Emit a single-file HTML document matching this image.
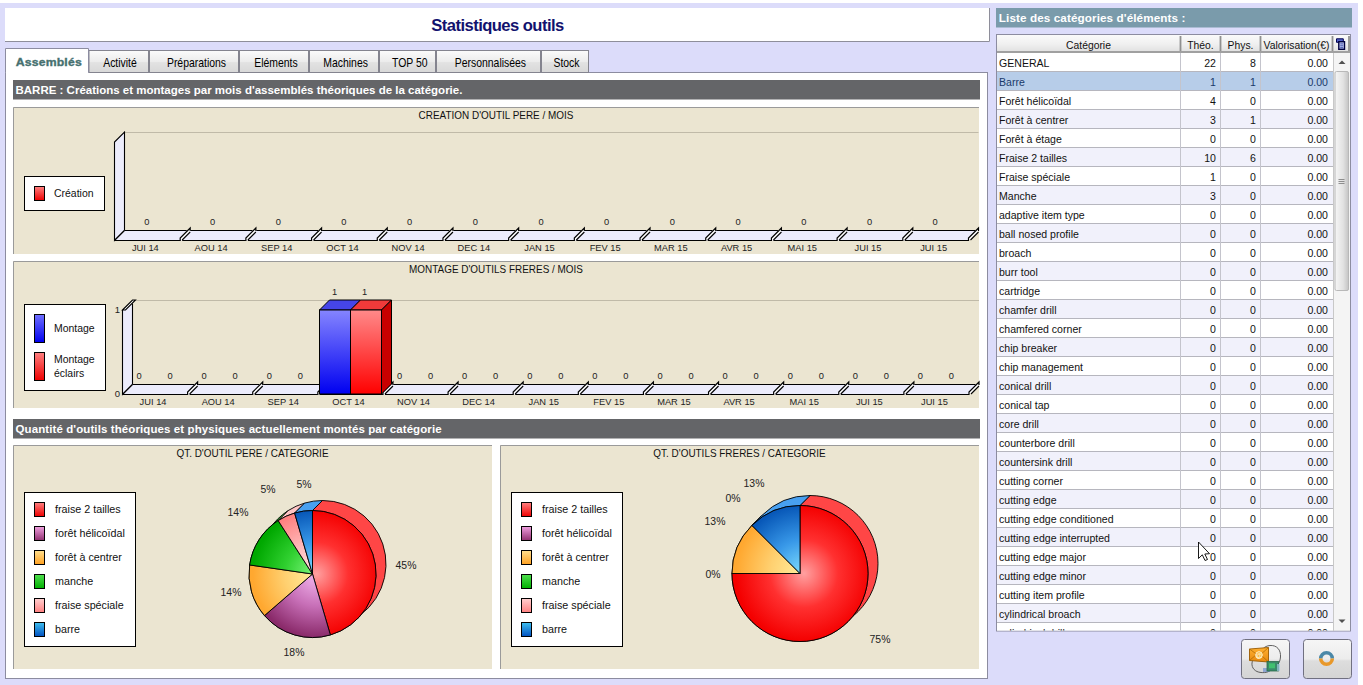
<!DOCTYPE html>
<html><head><meta charset="utf-8"><title>Statistiques outils</title>
<style>html,body{margin:0;padding:0;width:1363px;height:685px;overflow:hidden;background:#dcdcfa;} svg{display:block;font-family:"Liberation Sans", sans-serif;}</style>
</head><body><svg width="1363" height="685" viewBox="0 0 1363 685" font-family='"Liberation Sans", sans-serif'>
<defs>
<linearGradient id="tabg" x1="0" y1="0" x2="0" y2="1">
 <stop offset="0" stop-color="#fbfbfb"/><stop offset="0.5" stop-color="#ececec"/><stop offset="0.55" stop-color="#e2e2e2"/><stop offset="1" stop-color="#d8d8d8"/>
</linearGradient>
<linearGradient id="hdrg" x1="0" y1="0" x2="0" y2="1">
 <stop offset="0" stop-color="#fafafa"/><stop offset="0.5" stop-color="#f0f0f0"/><stop offset="1" stop-color="#dedede"/>
</linearGradient>
<linearGradient id="btng" x1="0" y1="0" x2="0" y2="1">
 <stop offset="0" stop-color="#f6f6f6"/><stop offset="0.5" stop-color="#ececec"/><stop offset="0.55" stop-color="#dddddd"/><stop offset="1" stop-color="#d4d4d4"/>
</linearGradient>
<linearGradient id="blueBar" x1="0" y1="0" x2="0" y2="1">
 <stop offset="0" stop-color="#8585ff"/><stop offset="1" stop-color="#0000f0"/>
</linearGradient>
<linearGradient id="redBar" x1="0" y1="0" x2="0" y2="1">
 <stop offset="0" stop-color="#ff8a8a"/><stop offset="1" stop-color="#ff0000"/>
</linearGradient>
<linearGradient id="lgRed" x1="0" y1="0" x2="0" y2="1"><stop offset="0" stop-color="#ff8080"/><stop offset="1" stop-color="#ee0000"/></linearGradient>
<linearGradient id="lgBlue" x1="0" y1="0" x2="0" y2="1"><stop offset="0" stop-color="#7070ff"/><stop offset="1" stop-color="#0000ee"/></linearGradient>
<linearGradient id="lgPurple" x1="0" y1="0" x2="0" y2="1"><stop offset="0" stop-color="#f0a0e0"/><stop offset="1" stop-color="#903070"/></linearGradient>
<linearGradient id="lgOrange" x1="0" y1="0" x2="0" y2="1"><stop offset="0" stop-color="#ffe090"/><stop offset="1" stop-color="#ffa020"/></linearGradient>
<linearGradient id="lgGreen" x1="0" y1="0" x2="0" y2="1"><stop offset="0" stop-color="#50e050"/><stop offset="1" stop-color="#00b000"/></linearGradient>
<linearGradient id="lgPink" x1="0" y1="0" x2="0" y2="1"><stop offset="0" stop-color="#ffd0d0"/><stop offset="1" stop-color="#ff8080"/></linearGradient>
<linearGradient id="lgBarre" x1="0" y1="0" x2="0" y2="1"><stop offset="0" stop-color="#40c0f0"/><stop offset="1" stop-color="#0050c0"/></linearGradient>
<radialGradient id="pRed" cx="0.6" cy="0.45" r="0.6"><stop offset="0" stop-color="#ff9a9a"/><stop offset="1" stop-color="#ff0000"/></radialGradient>
<linearGradient id="pPurple" x1="0" y1="1" x2="1" y2="0"><stop offset="0" stop-color="#902c70"/><stop offset="1" stop-color="#f0a0e8"/></linearGradient>
<linearGradient id="pOrange" x1="0" y1="0" x2="1" y2="0.3"><stop offset="0" stop-color="#ffb040"/><stop offset="1" stop-color="#ffe890"/></linearGradient>
<linearGradient id="pGreen" x1="0" y1="0.3" x2="1" y2="0.7"><stop offset="0" stop-color="#00b800"/><stop offset="1" stop-color="#60f060"/></linearGradient>
<linearGradient id="pPink" x1="0" y1="0" x2="1" y2="1"><stop offset="0" stop-color="#ff8888"/><stop offset="1" stop-color="#ffd0d0"/></linearGradient>
<linearGradient id="pBlue" x1="0" y1="0" x2="1" y2="1"><stop offset="0" stop-color="#0048b8"/><stop offset="1" stop-color="#50c0ff"/></linearGradient>
</defs>
<rect x="0" y="0" width="1363" height="685" fill="#dcdcfa"/>
<rect x="0" y="0" width="1363" height="3" fill="#ffffff"/>
<rect x="1358" y="0" width="5" height="685" fill="#ffffff"/>
<rect x="5" y="8" width="985" height="34" fill="#ffffff"/>
<path d="M989.5 8 V41.5 H5" fill="none" stroke="#8e8e9a" stroke-width="1"/>
<text x="497.5" y="31" font-size="16.6" font-weight="700" fill="#12126e" text-anchor="middle" letter-spacing="-0.55" >Statistiques outils</text>
<rect x="5.5" y="72.5" width="982" height="606" fill="#ffffff" stroke="#8c8ca0" stroke-width="1"/>
<rect x="89" y="50.5" width="59.5" height="22" fill="url(#tabg)" stroke="#84848f" stroke-width="1"/>
<text transform="translate(120 67) scale(0.87 1)" x="0" y="0" font-size="12" font-weight="400" fill="#000" text-anchor="middle" >Activité</text>
<rect x="149.5" y="50.5" width="89.0" height="22" fill="url(#tabg)" stroke="#84848f" stroke-width="1"/>
<text transform="translate(196.5 67) scale(0.87 1)" x="0" y="0" font-size="12" font-weight="400" fill="#000" text-anchor="middle" >Préparations</text>
<rect x="239.5" y="50.5" width="69.0" height="22" fill="url(#tabg)" stroke="#84848f" stroke-width="1"/>
<text transform="translate(276 67) scale(0.87 1)" x="0" y="0" font-size="12" font-weight="400" fill="#000" text-anchor="middle" >Eléments</text>
<rect x="309.5" y="50.5" width="69.0" height="22" fill="url(#tabg)" stroke="#84848f" stroke-width="1"/>
<text transform="translate(345.6 67) scale(0.87 1)" x="0" y="0" font-size="12" font-weight="400" fill="#000" text-anchor="middle" >Machines</text>
<rect x="379.5" y="50.5" width="56.0" height="22" fill="url(#tabg)" stroke="#84848f" stroke-width="1"/>
<text transform="translate(409.8 67) scale(0.87 1)" x="0" y="0" font-size="12" font-weight="400" fill="#000" text-anchor="middle" >TOP 50</text>
<rect x="436.5" y="50.5" width="104.0" height="22" fill="url(#tabg)" stroke="#84848f" stroke-width="1"/>
<text transform="translate(490.4 67) scale(0.87 1)" x="0" y="0" font-size="12" font-weight="400" fill="#000" text-anchor="middle" >Personnalisées</text>
<rect x="541.5" y="50.5" width="47.0" height="22" fill="url(#tabg)" stroke="#84848f" stroke-width="1"/>
<text transform="translate(566.5 67) scale(0.87 1)" x="0" y="0" font-size="12" font-weight="400" fill="#000" text-anchor="middle" >Stock</text>
<path d="M5.5 72.5 V48.5 H88.5 V72.5" fill="#ffffff" stroke="#8c8ca0" stroke-width="1"/>
<rect x="6" y="70" width="82" height="4" fill="#ffffff"/>
<g transform="translate(48.8 65.9) scale(1.115 1)"><text x="0" y="0" font-size="11" font-weight="700" fill="#46706f" text-anchor="middle" letter-spacing="0.15" stroke="#46706f" stroke-width="0.35">Assemblés</text></g>
<rect x="13" y="80" width="967" height="19.5" fill="#646568"/>
<text x="15.5" y="94.3" font-size="11.5" font-weight="700" fill="#ffffff" text-anchor="start" >BARRE : Créations et montages par mois d'assemblés théoriques de la catégorie.</text>
<rect x="13" y="107" width="966" height="147" fill="#ebe5d1"/>
<path d="M13.5 254 V107.5 H979" fill="none" stroke="#9a9a9a" stroke-width="1"/>
<text transform="translate(496 118.6) scale(0.925 1)" x="0" y="0" font-size="10.75" font-weight="400" fill="#111" text-anchor="middle" >CREATION D'OUTIL PERE / MOIS</text>
<line x1="124.5" y1="132.5" x2="978.5" y2="132.5" stroke="#c0baa8" stroke-width="1"/>
<path d="M114.5 240.5 V142 L124.5 132 V230.5 Z" fill="#ececfc" stroke="#000" stroke-width="1.1"/>
<path d="M114.5 240.5 L124.5 230.5 H978.5 L968.5 240.5 Z" fill="#ececfc"/>
<path d="M114.5 240.5 L124.5 230.5" stroke="#000" stroke-width="1.1"/>
<path d="M114.5 240.5 H180.19230769230768" stroke="#000" stroke-width="1.1"/>
<path d="M124.5 230.5 H186.69230769230768" stroke="#000" stroke-width="1.1"/>
<path d="M182.19230769230768 240.5 H245.8846153846154" stroke="#000" stroke-width="1.1"/>
<path d="M190.69230769230768 230.5 H252.3846153846154" stroke="#000" stroke-width="1.1"/>
<path d="M247.8846153846154 240.5 H311.5769230769231" stroke="#000" stroke-width="1.1"/>
<path d="M256.38461538461536 230.5 H318.0769230769231" stroke="#000" stroke-width="1.1"/>
<path d="M313.5769230769231 240.5 H377.2692307692308" stroke="#000" stroke-width="1.1"/>
<path d="M322.0769230769231 230.5 H383.7692307692308" stroke="#000" stroke-width="1.1"/>
<path d="M379.2692307692308 240.5 H442.96153846153845" stroke="#000" stroke-width="1.1"/>
<path d="M387.7692307692308 230.5 H449.46153846153845" stroke="#000" stroke-width="1.1"/>
<path d="M444.96153846153845 240.5 H508.6538461538462" stroke="#000" stroke-width="1.1"/>
<path d="M453.46153846153845 230.5 H515.1538461538462" stroke="#000" stroke-width="1.1"/>
<path d="M510.6538461538462 240.5 H574.3461538461538" stroke="#000" stroke-width="1.1"/>
<path d="M519.1538461538462 230.5 H580.8461538461538" stroke="#000" stroke-width="1.1"/>
<path d="M576.3461538461538 240.5 H640.0384615384615" stroke="#000" stroke-width="1.1"/>
<path d="M584.8461538461538 230.5 H646.5384615384615" stroke="#000" stroke-width="1.1"/>
<path d="M642.0384615384615 240.5 H705.7307692307693" stroke="#000" stroke-width="1.1"/>
<path d="M650.5384615384615 230.5 H712.2307692307693" stroke="#000" stroke-width="1.1"/>
<path d="M707.7307692307693 240.5 H771.4230769230769" stroke="#000" stroke-width="1.1"/>
<path d="M716.2307692307693 230.5 H777.9230769230769" stroke="#000" stroke-width="1.1"/>
<path d="M773.4230769230769 240.5 H837.1153846153846" stroke="#000" stroke-width="1.1"/>
<path d="M781.9230769230769 230.5 H843.6153846153846" stroke="#000" stroke-width="1.1"/>
<path d="M839.1153846153846 240.5 H902.8076923076924" stroke="#000" stroke-width="1.1"/>
<path d="M847.6153846153846 230.5 H909.3076923076924" stroke="#000" stroke-width="1.1"/>
<path d="M904.8076923076924 240.5 H968.5" stroke="#000" stroke-width="1.1"/>
<path d="M913.3076923076924 230.5 H975.0" stroke="#000" stroke-width="1.1"/>
<path d="M180.19230769230768 240.5 V238.0 L190.19230769230768 228.0 V231.0 L182.19230769230768 239.0 Z" fill="#ffffff" stroke="none"/>
<path d="M180.19230769230768 241.0 V238.0 L190.19230769230768 228.0 V231.0" stroke="#000" stroke-width="1.2" fill="none"/>
<path d="M182.19230769230768 240.0 L190.19230769230768 232.0" stroke="#000" stroke-width="1.1" fill="none"/>
<path d="M245.8846153846154 240.5 V238.0 L255.8846153846154 228.0 V231.0 L247.8846153846154 239.0 Z" fill="#ffffff" stroke="none"/>
<path d="M245.8846153846154 241.0 V238.0 L255.8846153846154 228.0 V231.0" stroke="#000" stroke-width="1.2" fill="none"/>
<path d="M247.8846153846154 240.0 L255.8846153846154 232.0" stroke="#000" stroke-width="1.1" fill="none"/>
<path d="M311.5769230769231 240.5 V238.0 L321.5769230769231 228.0 V231.0 L313.5769230769231 239.0 Z" fill="#ffffff" stroke="none"/>
<path d="M311.5769230769231 241.0 V238.0 L321.5769230769231 228.0 V231.0" stroke="#000" stroke-width="1.2" fill="none"/>
<path d="M313.5769230769231 240.0 L321.5769230769231 232.0" stroke="#000" stroke-width="1.1" fill="none"/>
<path d="M377.2692307692308 240.5 V238.0 L387.2692307692308 228.0 V231.0 L379.2692307692308 239.0 Z" fill="#ffffff" stroke="none"/>
<path d="M377.2692307692308 241.0 V238.0 L387.2692307692308 228.0 V231.0" stroke="#000" stroke-width="1.2" fill="none"/>
<path d="M379.2692307692308 240.0 L387.2692307692308 232.0" stroke="#000" stroke-width="1.1" fill="none"/>
<path d="M442.96153846153845 240.5 V238.0 L452.96153846153845 228.0 V231.0 L444.96153846153845 239.0 Z" fill="#ffffff" stroke="none"/>
<path d="M442.96153846153845 241.0 V238.0 L452.96153846153845 228.0 V231.0" stroke="#000" stroke-width="1.2" fill="none"/>
<path d="M444.96153846153845 240.0 L452.96153846153845 232.0" stroke="#000" stroke-width="1.1" fill="none"/>
<path d="M508.6538461538462 240.5 V238.0 L518.6538461538462 228.0 V231.0 L510.6538461538462 239.0 Z" fill="#ffffff" stroke="none"/>
<path d="M508.6538461538462 241.0 V238.0 L518.6538461538462 228.0 V231.0" stroke="#000" stroke-width="1.2" fill="none"/>
<path d="M510.6538461538462 240.0 L518.6538461538462 232.0" stroke="#000" stroke-width="1.1" fill="none"/>
<path d="M574.3461538461538 240.5 V238.0 L584.3461538461538 228.0 V231.0 L576.3461538461538 239.0 Z" fill="#ffffff" stroke="none"/>
<path d="M574.3461538461538 241.0 V238.0 L584.3461538461538 228.0 V231.0" stroke="#000" stroke-width="1.2" fill="none"/>
<path d="M576.3461538461538 240.0 L584.3461538461538 232.0" stroke="#000" stroke-width="1.1" fill="none"/>
<path d="M640.0384615384615 240.5 V238.0 L650.0384615384615 228.0 V231.0 L642.0384615384615 239.0 Z" fill="#ffffff" stroke="none"/>
<path d="M640.0384615384615 241.0 V238.0 L650.0384615384615 228.0 V231.0" stroke="#000" stroke-width="1.2" fill="none"/>
<path d="M642.0384615384615 240.0 L650.0384615384615 232.0" stroke="#000" stroke-width="1.1" fill="none"/>
<path d="M705.7307692307693 240.5 V238.0 L715.7307692307693 228.0 V231.0 L707.7307692307693 239.0 Z" fill="#ffffff" stroke="none"/>
<path d="M705.7307692307693 241.0 V238.0 L715.7307692307693 228.0 V231.0" stroke="#000" stroke-width="1.2" fill="none"/>
<path d="M707.7307692307693 240.0 L715.7307692307693 232.0" stroke="#000" stroke-width="1.1" fill="none"/>
<path d="M771.4230769230769 240.5 V238.0 L781.4230769230769 228.0 V231.0 L773.4230769230769 239.0 Z" fill="#ffffff" stroke="none"/>
<path d="M771.4230769230769 241.0 V238.0 L781.4230769230769 228.0 V231.0" stroke="#000" stroke-width="1.2" fill="none"/>
<path d="M773.4230769230769 240.0 L781.4230769230769 232.0" stroke="#000" stroke-width="1.1" fill="none"/>
<path d="M837.1153846153846 240.5 V238.0 L847.1153846153846 228.0 V231.0 L839.1153846153846 239.0 Z" fill="#ffffff" stroke="none"/>
<path d="M837.1153846153846 241.0 V238.0 L847.1153846153846 228.0 V231.0" stroke="#000" stroke-width="1.2" fill="none"/>
<path d="M839.1153846153846 240.0 L847.1153846153846 232.0" stroke="#000" stroke-width="1.1" fill="none"/>
<path d="M902.8076923076924 240.5 V238.0 L912.8076923076924 228.0 V231.0 L904.8076923076924 239.0 Z" fill="#ffffff" stroke="none"/>
<path d="M902.8076923076924 241.0 V238.0 L912.8076923076924 228.0 V231.0" stroke="#000" stroke-width="1.2" fill="none"/>
<path d="M904.8076923076924 240.0 L912.8076923076924 232.0" stroke="#000" stroke-width="1.1" fill="none"/>
<path d="M968.5 240.5 V238.0 L978.5 228.0 V231.0 L970.5 239.0 Z" fill="#ffffff" stroke="none"/>
<path d="M968.5 241.0 V238.0 L978.5 228.0 V231.0" stroke="#000" stroke-width="1.2" fill="none"/>
<path d="M970.5 240.0 L978.5 232.0" stroke="#000" stroke-width="1.1" fill="none"/>
<text x="145.34615384615384" y="250.7" font-size="9.3" font-weight="400" fill="#222" text-anchor="middle" >JUI 14</text>
<text x="211.03846153846155" y="250.7" font-size="9.3" font-weight="400" fill="#222" text-anchor="middle" >AOU 14</text>
<text x="276.7307692307692" y="250.7" font-size="9.3" font-weight="400" fill="#222" text-anchor="middle" >SEP 14</text>
<text x="342.4230769230769" y="250.7" font-size="9.3" font-weight="400" fill="#222" text-anchor="middle" >OCT 14</text>
<text x="408.11538461538464" y="250.7" font-size="9.3" font-weight="400" fill="#222" text-anchor="middle" >NOV 14</text>
<text x="473.8076923076923" y="250.7" font-size="9.3" font-weight="400" fill="#222" text-anchor="middle" >DEC 14</text>
<text x="539.5" y="250.7" font-size="9.3" font-weight="400" fill="#222" text-anchor="middle" >JAN 15</text>
<text x="605.1923076923076" y="250.7" font-size="9.3" font-weight="400" fill="#222" text-anchor="middle" >FEV 15</text>
<text x="670.8846153846154" y="250.7" font-size="9.3" font-weight="400" fill="#222" text-anchor="middle" >MAR 15</text>
<text x="736.5769230769231" y="250.7" font-size="9.3" font-weight="400" fill="#222" text-anchor="middle" >AVR 15</text>
<text x="802.2692307692308" y="250.7" font-size="9.3" font-weight="400" fill="#222" text-anchor="middle" >MAI 15</text>
<text x="867.9615384615385" y="250.7" font-size="9.3" font-weight="400" fill="#222" text-anchor="middle" >JUI 15</text>
<text x="933.6538461538462" y="250.7" font-size="9.3" font-weight="400" fill="#222" text-anchor="middle" >JUI 15</text>
<text x="146.84615384615384" y="224.9" font-size="9.3" font-weight="400" fill="#222" text-anchor="middle" >0</text>
<text x="212.53846153846155" y="224.9" font-size="9.3" font-weight="400" fill="#222" text-anchor="middle" >0</text>
<text x="278.2307692307692" y="224.9" font-size="9.3" font-weight="400" fill="#222" text-anchor="middle" >0</text>
<text x="343.9230769230769" y="224.9" font-size="9.3" font-weight="400" fill="#222" text-anchor="middle" >0</text>
<text x="409.61538461538464" y="224.9" font-size="9.3" font-weight="400" fill="#222" text-anchor="middle" >0</text>
<text x="475.3076923076923" y="224.9" font-size="9.3" font-weight="400" fill="#222" text-anchor="middle" >0</text>
<text x="541.0" y="224.9" font-size="9.3" font-weight="400" fill="#222" text-anchor="middle" >0</text>
<text x="606.6923076923076" y="224.9" font-size="9.3" font-weight="400" fill="#222" text-anchor="middle" >0</text>
<text x="672.3846153846154" y="224.9" font-size="9.3" font-weight="400" fill="#222" text-anchor="middle" >0</text>
<text x="738.0769230769231" y="224.9" font-size="9.3" font-weight="400" fill="#222" text-anchor="middle" >0</text>
<text x="803.7692307692308" y="224.9" font-size="9.3" font-weight="400" fill="#222" text-anchor="middle" >0</text>
<text x="869.4615384615385" y="224.9" font-size="9.3" font-weight="400" fill="#222" text-anchor="middle" >0</text>
<text x="935.1538461538462" y="224.9" font-size="9.3" font-weight="400" fill="#222" text-anchor="middle" >0</text>
<rect x="24.5" y="176.5" width="80" height="34" fill="#fff" stroke="#000" stroke-width="1"/>
<rect x="34.5" y="186.5" width="10" height="14" fill="url(#lgRed)" stroke="#000" stroke-width="1"/>
<text transform="translate(54 197) scale(0.91 1)" x="0" y="0" font-size="11.5" font-weight="400" fill="#111" text-anchor="start" >Création</text>
<rect x="13" y="261" width="966" height="147" fill="#ebe5d1"/>
<path d="M13.5 408 V261.5 H979" fill="none" stroke="#9a9a9a" stroke-width="1"/>
<text transform="translate(496 272.6) scale(0.925 1)" x="0" y="0" font-size="10.75" font-weight="400" fill="#111" text-anchor="middle" >MONTAGE D'OUTILS FRERES / MOIS</text>
<line x1="132.5" y1="300.5" x2="979" y2="300.5" stroke="#c0baa8" stroke-width="1"/>
<path d="M122.5 310 V394.5 L132.5 384.5 V303.5" fill="#ececfc" stroke="#000" stroke-width="1.1"/>
<path d="M122.5 310 L132.5 300 H135.5 L125.5 310 Z" fill="#ffffff" stroke="#000" stroke-width="1.1" stroke-linejoin="miter"/>
<path d="M122.5 394.5 L132.5 384.5 H979 L969 394.5 Z" fill="#ececfc"/>
<path d="M122.5 394.5 L132.5 384.5" stroke="#000" stroke-width="1.1"/>
<path d="M122.5 394.5 H187.6153846153846" stroke="#000" stroke-width="1.1"/>
<path d="M132.5 384.5 H194.1153846153846" stroke="#000" stroke-width="1.1"/>
<path d="M189.6153846153846 394.5 H252.73076923076923" stroke="#000" stroke-width="1.1"/>
<path d="M198.1153846153846 384.5 H259.2307692307692" stroke="#000" stroke-width="1.1"/>
<path d="M254.73076923076923 394.5 H317.8461538461538" stroke="#000" stroke-width="1.1"/>
<path d="M263.2307692307692 384.5 H324.3461538461538" stroke="#000" stroke-width="1.1"/>
<path d="M319.8461538461538 394.5 H382.96153846153845" stroke="#000" stroke-width="1.1"/>
<path d="M328.3461538461538 384.5 H389.46153846153845" stroke="#000" stroke-width="1.1"/>
<path d="M384.96153846153845 394.5 H448.0769230769231" stroke="#000" stroke-width="1.1"/>
<path d="M393.46153846153845 384.5 H454.5769230769231" stroke="#000" stroke-width="1.1"/>
<path d="M450.0769230769231 394.5 H513.1923076923076" stroke="#000" stroke-width="1.1"/>
<path d="M458.5769230769231 384.5 H519.6923076923076" stroke="#000" stroke-width="1.1"/>
<path d="M515.1923076923076 394.5 H578.3076923076923" stroke="#000" stroke-width="1.1"/>
<path d="M523.6923076923076 384.5 H584.8076923076923" stroke="#000" stroke-width="1.1"/>
<path d="M580.3076923076923 394.5 H643.4230769230769" stroke="#000" stroke-width="1.1"/>
<path d="M588.8076923076923 384.5 H649.9230769230769" stroke="#000" stroke-width="1.1"/>
<path d="M645.4230769230769 394.5 H708.5384615384615" stroke="#000" stroke-width="1.1"/>
<path d="M653.9230769230769 384.5 H715.0384615384615" stroke="#000" stroke-width="1.1"/>
<path d="M710.5384615384615 394.5 H773.6538461538462" stroke="#000" stroke-width="1.1"/>
<path d="M719.0384615384615 384.5 H780.1538461538462" stroke="#000" stroke-width="1.1"/>
<path d="M775.6538461538462 394.5 H838.7692307692307" stroke="#000" stroke-width="1.1"/>
<path d="M784.1538461538462 384.5 H845.2692307692307" stroke="#000" stroke-width="1.1"/>
<path d="M840.7692307692307 394.5 H903.8846153846154" stroke="#000" stroke-width="1.1"/>
<path d="M849.2692307692307 384.5 H910.3846153846154" stroke="#000" stroke-width="1.1"/>
<path d="M905.8846153846154 394.5 H969.0" stroke="#000" stroke-width="1.1"/>
<path d="M914.3846153846154 384.5 H975.5" stroke="#000" stroke-width="1.1"/>
<path d="M187.6153846153846 394.5 V392.0 L197.6153846153846 382.0 V385.0 L189.6153846153846 393.0 Z" fill="#ffffff" stroke="none"/>
<path d="M187.6153846153846 395.0 V392.0 L197.6153846153846 382.0 V385.0" stroke="#000" stroke-width="1.2" fill="none"/>
<path d="M189.6153846153846 394.0 L197.6153846153846 386.0" stroke="#000" stroke-width="1.1" fill="none"/>
<path d="M252.73076923076923 394.5 V392.0 L262.7307692307692 382.0 V385.0 L254.73076923076923 393.0 Z" fill="#ffffff" stroke="none"/>
<path d="M252.73076923076923 395.0 V392.0 L262.7307692307692 382.0 V385.0" stroke="#000" stroke-width="1.2" fill="none"/>
<path d="M254.73076923076923 394.0 L262.7307692307692 386.0" stroke="#000" stroke-width="1.1" fill="none"/>
<path d="M317.8461538461538 394.5 V392.0 L327.8461538461538 382.0 V385.0 L319.8461538461538 393.0 Z" fill="#ffffff" stroke="none"/>
<path d="M317.8461538461538 395.0 V392.0 L327.8461538461538 382.0 V385.0" stroke="#000" stroke-width="1.2" fill="none"/>
<path d="M319.8461538461538 394.0 L327.8461538461538 386.0" stroke="#000" stroke-width="1.1" fill="none"/>
<path d="M382.96153846153845 394.5 V392.0 L392.96153846153845 382.0 V385.0 L384.96153846153845 393.0 Z" fill="#ffffff" stroke="none"/>
<path d="M382.96153846153845 395.0 V392.0 L392.96153846153845 382.0 V385.0" stroke="#000" stroke-width="1.2" fill="none"/>
<path d="M384.96153846153845 394.0 L392.96153846153845 386.0" stroke="#000" stroke-width="1.1" fill="none"/>
<path d="M448.0769230769231 394.5 V392.0 L458.0769230769231 382.0 V385.0 L450.0769230769231 393.0 Z" fill="#ffffff" stroke="none"/>
<path d="M448.0769230769231 395.0 V392.0 L458.0769230769231 382.0 V385.0" stroke="#000" stroke-width="1.2" fill="none"/>
<path d="M450.0769230769231 394.0 L458.0769230769231 386.0" stroke="#000" stroke-width="1.1" fill="none"/>
<path d="M513.1923076923076 394.5 V392.0 L523.1923076923076 382.0 V385.0 L515.1923076923076 393.0 Z" fill="#ffffff" stroke="none"/>
<path d="M513.1923076923076 395.0 V392.0 L523.1923076923076 382.0 V385.0" stroke="#000" stroke-width="1.2" fill="none"/>
<path d="M515.1923076923076 394.0 L523.1923076923076 386.0" stroke="#000" stroke-width="1.1" fill="none"/>
<path d="M578.3076923076923 394.5 V392.0 L588.3076923076923 382.0 V385.0 L580.3076923076923 393.0 Z" fill="#ffffff" stroke="none"/>
<path d="M578.3076923076923 395.0 V392.0 L588.3076923076923 382.0 V385.0" stroke="#000" stroke-width="1.2" fill="none"/>
<path d="M580.3076923076923 394.0 L588.3076923076923 386.0" stroke="#000" stroke-width="1.1" fill="none"/>
<path d="M643.4230769230769 394.5 V392.0 L653.4230769230769 382.0 V385.0 L645.4230769230769 393.0 Z" fill="#ffffff" stroke="none"/>
<path d="M643.4230769230769 395.0 V392.0 L653.4230769230769 382.0 V385.0" stroke="#000" stroke-width="1.2" fill="none"/>
<path d="M645.4230769230769 394.0 L653.4230769230769 386.0" stroke="#000" stroke-width="1.1" fill="none"/>
<path d="M708.5384615384615 394.5 V392.0 L718.5384615384615 382.0 V385.0 L710.5384615384615 393.0 Z" fill="#ffffff" stroke="none"/>
<path d="M708.5384615384615 395.0 V392.0 L718.5384615384615 382.0 V385.0" stroke="#000" stroke-width="1.2" fill="none"/>
<path d="M710.5384615384615 394.0 L718.5384615384615 386.0" stroke="#000" stroke-width="1.1" fill="none"/>
<path d="M773.6538461538462 394.5 V392.0 L783.6538461538462 382.0 V385.0 L775.6538461538462 393.0 Z" fill="#ffffff" stroke="none"/>
<path d="M773.6538461538462 395.0 V392.0 L783.6538461538462 382.0 V385.0" stroke="#000" stroke-width="1.2" fill="none"/>
<path d="M775.6538461538462 394.0 L783.6538461538462 386.0" stroke="#000" stroke-width="1.1" fill="none"/>
<path d="M838.7692307692307 394.5 V392.0 L848.7692307692307 382.0 V385.0 L840.7692307692307 393.0 Z" fill="#ffffff" stroke="none"/>
<path d="M838.7692307692307 395.0 V392.0 L848.7692307692307 382.0 V385.0" stroke="#000" stroke-width="1.2" fill="none"/>
<path d="M840.7692307692307 394.0 L848.7692307692307 386.0" stroke="#000" stroke-width="1.1" fill="none"/>
<path d="M903.8846153846154 394.5 V392.0 L913.8846153846154 382.0 V385.0 L905.8846153846154 393.0 Z" fill="#ffffff" stroke="none"/>
<path d="M903.8846153846154 395.0 V392.0 L913.8846153846154 382.0 V385.0" stroke="#000" stroke-width="1.2" fill="none"/>
<path d="M905.8846153846154 394.0 L913.8846153846154 386.0" stroke="#000" stroke-width="1.1" fill="none"/>
<path d="M969.0 394.5 V392.0 L979.0 382.0 V385.0 L971.0 393.0 Z" fill="#ffffff" stroke="none"/>
<path d="M969.0 395.0 V392.0 L979.0 382.0 V385.0" stroke="#000" stroke-width="1.2" fill="none"/>
<path d="M971.0 394.0 L979.0 386.0" stroke="#000" stroke-width="1.1" fill="none"/>
<text x="153.05769230769232" y="404.7" font-size="9.3" font-weight="400" fill="#222" text-anchor="middle" >JUI 14</text>
<text x="218.1730769230769" y="404.7" font-size="9.3" font-weight="400" fill="#222" text-anchor="middle" >AOU 14</text>
<text x="283.28846153846155" y="404.7" font-size="9.3" font-weight="400" fill="#222" text-anchor="middle" >SEP 14</text>
<text x="348.40384615384613" y="404.7" font-size="9.3" font-weight="400" fill="#222" text-anchor="middle" >OCT 14</text>
<text x="413.5192307692308" y="404.7" font-size="9.3" font-weight="400" fill="#222" text-anchor="middle" >NOV 14</text>
<text x="478.63461538461536" y="404.7" font-size="9.3" font-weight="400" fill="#222" text-anchor="middle" >DEC 14</text>
<text x="543.75" y="404.7" font-size="9.3" font-weight="400" fill="#222" text-anchor="middle" >JAN 15</text>
<text x="608.8653846153845" y="404.7" font-size="9.3" font-weight="400" fill="#222" text-anchor="middle" >FEV 15</text>
<text x="673.9807692307692" y="404.7" font-size="9.3" font-weight="400" fill="#222" text-anchor="middle" >MAR 15</text>
<text x="739.0961538461538" y="404.7" font-size="9.3" font-weight="400" fill="#222" text-anchor="middle" >AVR 15</text>
<text x="804.2115384615385" y="404.7" font-size="9.3" font-weight="400" fill="#222" text-anchor="middle" >MAI 15</text>
<text x="869.3269230769231" y="404.7" font-size="9.3" font-weight="400" fill="#222" text-anchor="middle" >JUI 15</text>
<text x="934.4423076923076" y="404.7" font-size="9.3" font-weight="400" fill="#222" text-anchor="middle" >JUI 15</text>
<text x="117.5" y="313" font-size="9.5" font-weight="400" fill="#222" text-anchor="middle" >1</text>
<text x="117.5" y="397" font-size="9.5" font-weight="400" fill="#222" text-anchor="middle" >0</text>
<text x="139.05769230769232" y="378.7" font-size="9.3" font-weight="400" fill="#222" text-anchor="middle" >0</text>
<text x="170.05769230769232" y="378.7" font-size="9.3" font-weight="400" fill="#222" text-anchor="middle" >0</text>
<text x="204.1730769230769" y="378.7" font-size="9.3" font-weight="400" fill="#222" text-anchor="middle" >0</text>
<text x="235.1730769230769" y="378.7" font-size="9.3" font-weight="400" fill="#222" text-anchor="middle" >0</text>
<text x="269.28846153846155" y="378.7" font-size="9.3" font-weight="400" fill="#222" text-anchor="middle" >0</text>
<text x="300.28846153846155" y="378.7" font-size="9.3" font-weight="400" fill="#222" text-anchor="middle" >0</text>
<text x="399.5192307692308" y="378.7" font-size="9.3" font-weight="400" fill="#222" text-anchor="middle" >0</text>
<text x="430.5192307692308" y="378.7" font-size="9.3" font-weight="400" fill="#222" text-anchor="middle" >0</text>
<text x="464.63461538461536" y="378.7" font-size="9.3" font-weight="400" fill="#222" text-anchor="middle" >0</text>
<text x="495.63461538461536" y="378.7" font-size="9.3" font-weight="400" fill="#222" text-anchor="middle" >0</text>
<text x="529.75" y="378.7" font-size="9.3" font-weight="400" fill="#222" text-anchor="middle" >0</text>
<text x="560.75" y="378.7" font-size="9.3" font-weight="400" fill="#222" text-anchor="middle" >0</text>
<text x="594.8653846153845" y="378.7" font-size="9.3" font-weight="400" fill="#222" text-anchor="middle" >0</text>
<text x="625.8653846153845" y="378.7" font-size="9.3" font-weight="400" fill="#222" text-anchor="middle" >0</text>
<text x="659.9807692307692" y="378.7" font-size="9.3" font-weight="400" fill="#222" text-anchor="middle" >0</text>
<text x="690.9807692307692" y="378.7" font-size="9.3" font-weight="400" fill="#222" text-anchor="middle" >0</text>
<text x="725.0961538461538" y="378.7" font-size="9.3" font-weight="400" fill="#222" text-anchor="middle" >0</text>
<text x="756.0961538461538" y="378.7" font-size="9.3" font-weight="400" fill="#222" text-anchor="middle" >0</text>
<text x="790.2115384615385" y="378.7" font-size="9.3" font-weight="400" fill="#222" text-anchor="middle" >0</text>
<text x="821.2115384615385" y="378.7" font-size="9.3" font-weight="400" fill="#222" text-anchor="middle" >0</text>
<text x="855.3269230769231" y="378.7" font-size="9.3" font-weight="400" fill="#222" text-anchor="middle" >0</text>
<text x="886.3269230769231" y="378.7" font-size="9.3" font-weight="400" fill="#222" text-anchor="middle" >0</text>
<text x="920.4423076923076" y="378.7" font-size="9.3" font-weight="400" fill="#222" text-anchor="middle" >0</text>
<text x="951.4423076923076" y="378.7" font-size="9.3" font-weight="400" fill="#222" text-anchor="middle" >0</text>
<path d="M319.5 310 L329.5 300 H360.5 L350.5 310 Z" fill="#4545e8" stroke="#000" stroke-width="1"/>
<path d="M350.5 310 L360.5 300 H391.5 L381.5 310 Z" fill="#f03a3a" stroke="#000" stroke-width="1"/>
<path d="M381.5 310 L391.5 300 V384 L381.5 394 Z" fill="#c80000" stroke="#000" stroke-width="1"/>
<rect x="319.5" y="310" width="31.0" height="84" fill="url(#blueBar)" stroke="#000" stroke-width="1"/>
<rect x="350.5" y="310" width="31.0" height="84" fill="url(#redBar)" stroke="#000" stroke-width="1"/>
<text x="334.5" y="294.7" font-size="9.3" font-weight="400" fill="#222" text-anchor="middle" >1</text>
<text x="364.5" y="294.7" font-size="9.3" font-weight="400" fill="#222" text-anchor="middle" >1</text>
<rect x="24.5" y="304.5" width="81" height="86" fill="#fff" stroke="#000" stroke-width="1"/>
<rect x="34.5" y="314.5" width="10" height="28" fill="url(#lgBlue)" stroke="#000" stroke-width="1"/>
<rect x="34.5" y="352.5" width="10" height="28" fill="url(#lgRed)" stroke="#000" stroke-width="1"/>
<text transform="translate(54 332) scale(0.91 1)" x="0" y="0" font-size="11.5" font-weight="400" fill="#111" text-anchor="start" >Montage</text>
<text transform="translate(54 363) scale(0.91 1)" x="0" y="0" font-size="11.5" font-weight="400" fill="#111" text-anchor="start" >Montage</text>
<text transform="translate(54 377) scale(0.91 1)" x="0" y="0" font-size="11.5" font-weight="400" fill="#111" text-anchor="start" >éclairs</text>
<rect x="13" y="419" width="967" height="19.5" fill="#646568"/>
<text x="15.5" y="433.3" font-size="11.5" font-weight="700" fill="#ffffff" text-anchor="start" letter-spacing="0.1" >Quantité d'outils théoriques et physiques actuellement montés par catégorie</text>
<rect x="13" y="445" width="479" height="224" fill="#ebe5d1"/>
<path d="M13.5 669 V445.5 H492" fill="none" stroke="#9a9a9a" stroke-width="1"/>
<text transform="translate(252.5 457.2) scale(0.925 1)" x="0" y="0" font-size="10.75" font-weight="400" fill="#111" text-anchor="middle" >QT. D'OUTIL PERE / CATEGORIE</text>
<rect x="24.5" y="492.5" width="111" height="154" fill="#fff" stroke="#000" stroke-width="1"/>
<rect x="34.5" y="502.5" width="10" height="14" fill="url(#lgRed)" stroke="#000" stroke-width="1"/>
<text transform="translate(55.0 512.7) scale(0.935 1)" x="0" y="0" font-size="11.5" font-weight="400" fill="#111" text-anchor="start" >fraise 2 tailles</text>
<rect x="34.5" y="526.5" width="10" height="14" fill="url(#lgPurple)" stroke="#000" stroke-width="1"/>
<text transform="translate(55.0 536.7) scale(0.935 1)" x="0" y="0" font-size="11.5" font-weight="400" fill="#111" text-anchor="start" >forêt hélicoïdal</text>
<rect x="34.5" y="550.5" width="10" height="14" fill="url(#lgOrange)" stroke="#000" stroke-width="1"/>
<text transform="translate(55.0 560.7) scale(0.935 1)" x="0" y="0" font-size="11.5" font-weight="400" fill="#111" text-anchor="start" >forêt à centrer</text>
<rect x="34.5" y="574.5" width="10" height="14" fill="url(#lgGreen)" stroke="#000" stroke-width="1"/>
<text transform="translate(55.0 584.7) scale(0.935 1)" x="0" y="0" font-size="11.5" font-weight="400" fill="#111" text-anchor="start" >manche</text>
<rect x="34.5" y="598.5" width="10" height="14" fill="url(#lgPink)" stroke="#000" stroke-width="1"/>
<text transform="translate(55.0 608.7) scale(0.935 1)" x="0" y="0" font-size="11.5" font-weight="400" fill="#111" text-anchor="start" >fraise spéciale</text>
<rect x="34.5" y="622.5" width="10" height="14" fill="url(#lgBarre)" stroke="#000" stroke-width="1"/>
<text transform="translate(55.0 632.7) scale(0.935 1)" x="0" y="0" font-size="11.5" font-weight="400" fill="#111" text-anchor="start" >barre</text>
<rect x="500" y="445" width="479" height="224" fill="#ebe5d1"/>
<path d="M500.5 669 V445.5 H979" fill="none" stroke="#9a9a9a" stroke-width="1"/>
<text transform="translate(739.5 457.2) scale(0.925 1)" x="0" y="0" font-size="10.75" font-weight="400" fill="#111" text-anchor="middle" >QT. D'OUTILS FRERES / CATEGORIE</text>
<rect x="511.5" y="492.5" width="111" height="154" fill="#fff" stroke="#000" stroke-width="1"/>
<rect x="521.5" y="502.5" width="10" height="14" fill="url(#lgRed)" stroke="#000" stroke-width="1"/>
<text transform="translate(542.0 512.7) scale(0.935 1)" x="0" y="0" font-size="11.5" font-weight="400" fill="#111" text-anchor="start" >fraise 2 tailles</text>
<rect x="521.5" y="526.5" width="10" height="14" fill="url(#lgPurple)" stroke="#000" stroke-width="1"/>
<text transform="translate(542.0 536.7) scale(0.935 1)" x="0" y="0" font-size="11.5" font-weight="400" fill="#111" text-anchor="start" >forêt hélicoïdal</text>
<rect x="521.5" y="550.5" width="10" height="14" fill="url(#lgOrange)" stroke="#000" stroke-width="1"/>
<text transform="translate(542.0 560.7) scale(0.935 1)" x="0" y="0" font-size="11.5" font-weight="400" fill="#111" text-anchor="start" >forêt à centrer</text>
<rect x="521.5" y="574.5" width="10" height="14" fill="url(#lgGreen)" stroke="#000" stroke-width="1"/>
<text transform="translate(542.0 584.7) scale(0.935 1)" x="0" y="0" font-size="11.5" font-weight="400" fill="#111" text-anchor="start" >manche</text>
<rect x="521.5" y="598.5" width="10" height="14" fill="url(#lgPink)" stroke="#000" stroke-width="1"/>
<text transform="translate(542.0 608.7) scale(0.935 1)" x="0" y="0" font-size="11.5" font-weight="400" fill="#111" text-anchor="start" >fraise spéciale</text>
<rect x="521.5" y="622.5" width="10" height="14" fill="url(#lgBarre)" stroke="#000" stroke-width="1"/>
<text transform="translate(542.0 632.7) scale(0.935 1)" x="0" y="0" font-size="11.5" font-weight="400" fill="#111" text-anchor="start" >barre</text>
<radialGradient id="pRed1" gradientUnits="userSpaceOnUse" cx="316.5" cy="574" r="63.5"><stop offset="0" stop-color="#ffa0a0"/><stop offset="0.5" stop-color="#ff3030"/><stop offset="1" stop-color="#f40000"/></radialGradient>
<radialGradient id="pPurple1" gradientUnits="userSpaceOnUse" cx="316.5" cy="574" r="63.5"><stop offset="0" stop-color="#f4b8f0"/><stop offset="0.5" stop-color="#c870b8"/><stop offset="1" stop-color="#8a2a6a"/></radialGradient>
<radialGradient id="pOrange1" gradientUnits="userSpaceOnUse" cx="316.5" cy="574" r="63.5"><stop offset="0" stop-color="#fff0a0"/><stop offset="0.5" stop-color="#ffd070"/><stop offset="1" stop-color="#ffa830"/></radialGradient>
<radialGradient id="pGreen1" gradientUnits="userSpaceOnUse" cx="316.5" cy="574" r="63.5"><stop offset="0" stop-color="#80f880"/><stop offset="0.5" stop-color="#30d030"/><stop offset="1" stop-color="#00a800"/></radialGradient>
<radialGradient id="pPink1" gradientUnits="userSpaceOnUse" cx="316.5" cy="574" r="63.5"><stop offset="0" stop-color="#ffe8e8"/><stop offset="0.5" stop-color="#ffb8b8"/><stop offset="1" stop-color="#ff8080"/></radialGradient>
<radialGradient id="pBlue1" gradientUnits="userSpaceOnUse" cx="316.5" cy="574" r="63.5"><stop offset="0" stop-color="#80e0ff"/><stop offset="0.5" stop-color="#3898e8"/><stop offset="1" stop-color="#0858b8"/></radialGradient>
<path d="M312.50 510.50 A63.5 63.5 0 0 1 330.39 634.93 L340.39 624.93 A63.5 63.5 0 0 0 322.50 500.50 Z" fill="#ff4646" stroke="#000" stroke-width="0.9" stroke-linejoin="round"/>
<path d="M330.39 634.93 A63.5 63.5 0 0 1 264.51 615.58 L274.51 605.58 A63.5 63.5 0 0 0 340.39 624.93 Z" fill="#c070b0" stroke="#000" stroke-width="0.9" stroke-linejoin="round"/>
<path d="M264.51 615.58 A63.5 63.5 0 0 1 249.65 564.96 L259.65 554.96 A63.5 63.5 0 0 0 274.51 605.58 Z" fill="#ffc868" stroke="#000" stroke-width="0.9" stroke-linejoin="round"/>
<path d="M249.65 564.96 A63.5 63.5 0 0 1 278.17 520.58 L288.17 510.58 A63.5 63.5 0 0 0 259.65 554.96 Z" fill="#40d040" stroke="#000" stroke-width="0.9" stroke-linejoin="round"/>
<path d="M278.17 520.58 A63.5 63.5 0 0 1 294.61 513.07 L304.61 503.07 A63.5 63.5 0 0 0 288.17 510.58 Z" fill="#ffc4c4" stroke="#000" stroke-width="0.9" stroke-linejoin="round"/>
<path d="M294.61 513.07 A63.5 63.5 0 0 1 312.50 510.50 L322.50 500.50 A63.5 63.5 0 0 0 304.61 503.07 Z" fill="#48a0f0" stroke="#000" stroke-width="0.9" stroke-linejoin="round"/>
<path d="M312.5 574 L312.50 510.50 A63.5 63.5 0 0 1 330.39 634.93 Z" fill="url(#pRed1)" stroke="#000" stroke-width="0.9"/>
<path d="M312.5 574 L330.39 634.93 A63.5 63.5 0 0 1 264.51 615.58 Z" fill="url(#pPurple1)" stroke="#000" stroke-width="0.9"/>
<path d="M312.5 574 L264.51 615.58 A63.5 63.5 0 0 1 249.65 564.96 Z" fill="url(#pOrange1)" stroke="#000" stroke-width="0.9"/>
<path d="M312.5 574 L249.65 564.96 A63.5 63.5 0 0 1 278.17 520.58 Z" fill="url(#pGreen1)" stroke="#000" stroke-width="0.9"/>
<path d="M312.5 574 L278.17 520.58 A63.5 63.5 0 0 1 294.61 513.07 Z" fill="url(#pPink1)" stroke="#000" stroke-width="0.9"/>
<path d="M312.5 574 L294.61 513.07 A63.5 63.5 0 0 1 312.50 510.50 Z" fill="url(#pBlue1)" stroke="#000" stroke-width="0.9"/>
<text transform="translate(406 569) scale(0.95 1)" x="0" y="0" font-size="11" font-weight="400" fill="#222" text-anchor="middle" >45%</text>
<text transform="translate(294 656) scale(0.95 1)" x="0" y="0" font-size="11" font-weight="400" fill="#222" text-anchor="middle" >18%</text>
<text transform="translate(231 596) scale(0.95 1)" x="0" y="0" font-size="11" font-weight="400" fill="#222" text-anchor="middle" >14%</text>
<text transform="translate(238 516) scale(0.95 1)" x="0" y="0" font-size="11" font-weight="400" fill="#222" text-anchor="middle" >14%</text>
<text transform="translate(268 493) scale(0.95 1)" x="0" y="0" font-size="11" font-weight="400" fill="#222" text-anchor="middle" >5%</text>
<text transform="translate(304 488) scale(0.95 1)" x="0" y="0" font-size="11" font-weight="400" fill="#222" text-anchor="middle" >5%</text>
<radialGradient id="pRed2" gradientUnits="userSpaceOnUse" cx="804" cy="573.5" r="68"><stop offset="0" stop-color="#ffa0a0"/><stop offset="0.5" stop-color="#ff3030"/><stop offset="1" stop-color="#f40000"/></radialGradient>
<radialGradient id="pPurple2" gradientUnits="userSpaceOnUse" cx="804" cy="573.5" r="68"><stop offset="0" stop-color="#f4b8f0"/><stop offset="0.5" stop-color="#c870b8"/><stop offset="1" stop-color="#8a2a6a"/></radialGradient>
<radialGradient id="pOrange2" gradientUnits="userSpaceOnUse" cx="804" cy="573.5" r="68"><stop offset="0" stop-color="#fff0a0"/><stop offset="0.5" stop-color="#ffd070"/><stop offset="1" stop-color="#ffa830"/></radialGradient>
<radialGradient id="pGreen2" gradientUnits="userSpaceOnUse" cx="804" cy="573.5" r="68"><stop offset="0" stop-color="#80f880"/><stop offset="0.5" stop-color="#30d030"/><stop offset="1" stop-color="#00a800"/></radialGradient>
<radialGradient id="pPink2" gradientUnits="userSpaceOnUse" cx="804" cy="573.5" r="68"><stop offset="0" stop-color="#ffe8e8"/><stop offset="0.5" stop-color="#ffb8b8"/><stop offset="1" stop-color="#ff8080"/></radialGradient>
<radialGradient id="pBlue2" gradientUnits="userSpaceOnUse" cx="804" cy="573.5" r="68"><stop offset="0" stop-color="#80e0ff"/><stop offset="0.5" stop-color="#3898e8"/><stop offset="1" stop-color="#0858b8"/></radialGradient>
<path d="M800.00 505.50 A68 68 0 1 1 732.00 573.50 L742.00 563.50 A68 68 0 1 0 810.00 495.50 Z" fill="#ff4646" stroke="#000" stroke-width="0.9" stroke-linejoin="round"/>
<path d="M732.00 573.50 A68 68 0 0 1 751.92 525.42 L761.92 515.42 A68 68 0 0 0 742.00 563.50 Z" fill="#ffc868" stroke="#000" stroke-width="0.9" stroke-linejoin="round"/>
<path d="M751.92 525.42 A68 68 0 0 1 800.00 505.50 L810.00 495.50 A68 68 0 0 0 761.92 515.42 Z" fill="#48a0f0" stroke="#000" stroke-width="0.9" stroke-linejoin="round"/>
<path d="M800 573.5 L800.00 505.50 A68 68 0 1 1 732.00 573.50 Z" fill="url(#pRed2)" stroke="#000" stroke-width="0.9"/>
<path d="M800 573.5 L732.00 573.50 A68 68 0 0 1 751.92 525.42 Z" fill="url(#pOrange2)" stroke="#000" stroke-width="0.9"/>
<path d="M800 573.5 L751.92 525.42 A68 68 0 0 1 800.00 505.50 Z" fill="url(#pBlue2)" stroke="#000" stroke-width="0.9"/>
<text transform="translate(880 643) scale(0.95 1)" x="0" y="0" font-size="11" font-weight="400" fill="#222" text-anchor="middle" >75%</text>
<text transform="translate(713 578) scale(0.95 1)" x="0" y="0" font-size="11" font-weight="400" fill="#222" text-anchor="middle" >0%</text>
<text transform="translate(715 525) scale(0.95 1)" x="0" y="0" font-size="11" font-weight="400" fill="#222" text-anchor="middle" >13%</text>
<text transform="translate(733 502) scale(0.95 1)" x="0" y="0" font-size="11" font-weight="400" fill="#222" text-anchor="middle" >0%</text>
<text transform="translate(754 487) scale(0.95 1)" x="0" y="0" font-size="11" font-weight="400" fill="#222" text-anchor="middle" >13%</text>
<rect x="996" y="8" width="356" height="19.5" fill="#7a9bab"/>
<text x="998.8" y="21.9" font-size="11.7" font-weight="700" fill="#ffffff" text-anchor="start" letter-spacing="0.1" >Liste des catégories d'éléments :</text>
<rect x="996.5" y="34.5" width="354.0" height="596.5" fill="#ffffff" stroke="#8c8ca0" stroke-width="1"/>
<rect x="997" y="35" width="353" height="18" fill="url(#hdrg)"/>
<line x1="997" y1="52" x2="1350" y2="52" stroke="#a0a0a0" stroke-width="2"/>
<line x1="1180.5" y1="36" x2="1180.5" y2="51" stroke="#909090" stroke-width="1.8"/>
<line x1="1220.5" y1="36" x2="1220.5" y2="51" stroke="#909090" stroke-width="1.8"/>
<line x1="1260.5" y1="36" x2="1260.5" y2="51" stroke="#909090" stroke-width="1.8"/>
<line x1="1332.5" y1="36" x2="1332.5" y2="51" stroke="#909090" stroke-width="1.8"/>
<line x1="1349" y1="36" x2="1349" y2="51" stroke="#909090" stroke-width="1.8"/>
<text transform="translate(1088.5 48.5) scale(0.9 1)" x="0" y="0" font-size="11.5" font-weight="400" fill="#111" text-anchor="middle" >Catégorie</text>
<text transform="translate(1200.5 48.5) scale(0.9 1)" x="0" y="0" font-size="11.5" font-weight="400" fill="#111" text-anchor="middle" >Théo.</text>
<text transform="translate(1240.5 48.5) scale(0.9 1)" x="0" y="0" font-size="11.5" font-weight="400" fill="#111" text-anchor="middle" >Phys.</text>
<text transform="translate(1296.5 48.5) scale(0.9 1)" x="0" y="0" font-size="11.5" font-weight="400" fill="#111" text-anchor="middle" >Valorisation(€)</text>
<clipPath id="tclip"><rect x="997" y="53" width="336" height="577.5"/></clipPath>
<g clip-path="url(#tclip)">
<rect x="997" y="53" width="336" height="19" fill="#ffffff"/>
<line x1="997" y1="71.5" x2="1333" y2="71.5" stroke="#b6b6be" stroke-width="1"/>
<text transform="translate(999 66.8) scale(0.92 1)" x="0" y="0" font-size="11.5" font-weight="400" fill="#111" text-anchor="start" >GENERAL</text>
<text transform="translate(1216 66.8) scale(0.92 1)" x="0" y="0" font-size="11.5" font-weight="400" fill="#111" text-anchor="end" >22</text>
<text transform="translate(1256 66.8) scale(0.92 1)" x="0" y="0" font-size="11.5" font-weight="400" fill="#111" text-anchor="end" >8</text>
<text transform="translate(1328 66.8) scale(0.92 1)" x="0" y="0" font-size="11.5" font-weight="400" fill="#111" text-anchor="end" >0.00</text>
<rect x="997" y="72" width="336" height="19" fill="#b7cde9"/>
<line x1="997" y1="90.5" x2="1333" y2="90.5" stroke="#b6b6be" stroke-width="1"/>
<text transform="translate(999 85.8) scale(0.92 1)" x="0" y="0" font-size="11.5" font-weight="400" fill="#1a3a6a" text-anchor="start" >Barre</text>
<text transform="translate(1216 85.8) scale(0.92 1)" x="0" y="0" font-size="11.5" font-weight="400" fill="#1a3a6a" text-anchor="end" >1</text>
<text transform="translate(1256 85.8) scale(0.92 1)" x="0" y="0" font-size="11.5" font-weight="400" fill="#1a3a6a" text-anchor="end" >1</text>
<text transform="translate(1328 85.8) scale(0.92 1)" x="0" y="0" font-size="11.5" font-weight="400" fill="#1a3a6a" text-anchor="end" >0.00</text>
<rect x="997" y="91" width="336" height="19" fill="#ffffff"/>
<line x1="997" y1="109.5" x2="1333" y2="109.5" stroke="#b6b6be" stroke-width="1"/>
<text transform="translate(999 104.8) scale(0.92 1)" x="0" y="0" font-size="11.5" font-weight="400" fill="#111" text-anchor="start" >Forêt hélicoïdal</text>
<text transform="translate(1216 104.8) scale(0.92 1)" x="0" y="0" font-size="11.5" font-weight="400" fill="#111" text-anchor="end" >4</text>
<text transform="translate(1256 104.8) scale(0.92 1)" x="0" y="0" font-size="11.5" font-weight="400" fill="#111" text-anchor="end" >0</text>
<text transform="translate(1328 104.8) scale(0.92 1)" x="0" y="0" font-size="11.5" font-weight="400" fill="#111" text-anchor="end" >0.00</text>
<rect x="997" y="110" width="336" height="19" fill="#f1f1fb"/>
<line x1="997" y1="128.5" x2="1333" y2="128.5" stroke="#b6b6be" stroke-width="1"/>
<text transform="translate(999 123.8) scale(0.92 1)" x="0" y="0" font-size="11.5" font-weight="400" fill="#111" text-anchor="start" >Forêt à centrer</text>
<text transform="translate(1216 123.8) scale(0.92 1)" x="0" y="0" font-size="11.5" font-weight="400" fill="#111" text-anchor="end" >3</text>
<text transform="translate(1256 123.8) scale(0.92 1)" x="0" y="0" font-size="11.5" font-weight="400" fill="#111" text-anchor="end" >1</text>
<text transform="translate(1328 123.8) scale(0.92 1)" x="0" y="0" font-size="11.5" font-weight="400" fill="#111" text-anchor="end" >0.00</text>
<rect x="997" y="129" width="336" height="19" fill="#ffffff"/>
<line x1="997" y1="147.5" x2="1333" y2="147.5" stroke="#b6b6be" stroke-width="1"/>
<text transform="translate(999 142.8) scale(0.92 1)" x="0" y="0" font-size="11.5" font-weight="400" fill="#111" text-anchor="start" >Forêt à étage</text>
<text transform="translate(1216 142.8) scale(0.92 1)" x="0" y="0" font-size="11.5" font-weight="400" fill="#111" text-anchor="end" >0</text>
<text transform="translate(1256 142.8) scale(0.92 1)" x="0" y="0" font-size="11.5" font-weight="400" fill="#111" text-anchor="end" >0</text>
<text transform="translate(1328 142.8) scale(0.92 1)" x="0" y="0" font-size="11.5" font-weight="400" fill="#111" text-anchor="end" >0.00</text>
<rect x="997" y="148" width="336" height="19" fill="#f1f1fb"/>
<line x1="997" y1="166.5" x2="1333" y2="166.5" stroke="#b6b6be" stroke-width="1"/>
<text transform="translate(999 161.8) scale(0.92 1)" x="0" y="0" font-size="11.5" font-weight="400" fill="#111" text-anchor="start" >Fraise 2 tailles</text>
<text transform="translate(1216 161.8) scale(0.92 1)" x="0" y="0" font-size="11.5" font-weight="400" fill="#111" text-anchor="end" >10</text>
<text transform="translate(1256 161.8) scale(0.92 1)" x="0" y="0" font-size="11.5" font-weight="400" fill="#111" text-anchor="end" >6</text>
<text transform="translate(1328 161.8) scale(0.92 1)" x="0" y="0" font-size="11.5" font-weight="400" fill="#111" text-anchor="end" >0.00</text>
<rect x="997" y="167" width="336" height="19" fill="#ffffff"/>
<line x1="997" y1="185.5" x2="1333" y2="185.5" stroke="#b6b6be" stroke-width="1"/>
<text transform="translate(999 180.8) scale(0.92 1)" x="0" y="0" font-size="11.5" font-weight="400" fill="#111" text-anchor="start" >Fraise spéciale</text>
<text transform="translate(1216 180.8) scale(0.92 1)" x="0" y="0" font-size="11.5" font-weight="400" fill="#111" text-anchor="end" >1</text>
<text transform="translate(1256 180.8) scale(0.92 1)" x="0" y="0" font-size="11.5" font-weight="400" fill="#111" text-anchor="end" >0</text>
<text transform="translate(1328 180.8) scale(0.92 1)" x="0" y="0" font-size="11.5" font-weight="400" fill="#111" text-anchor="end" >0.00</text>
<rect x="997" y="186" width="336" height="19" fill="#f1f1fb"/>
<line x1="997" y1="204.5" x2="1333" y2="204.5" stroke="#b6b6be" stroke-width="1"/>
<text transform="translate(999 199.8) scale(0.92 1)" x="0" y="0" font-size="11.5" font-weight="400" fill="#111" text-anchor="start" >Manche</text>
<text transform="translate(1216 199.8) scale(0.92 1)" x="0" y="0" font-size="11.5" font-weight="400" fill="#111" text-anchor="end" >3</text>
<text transform="translate(1256 199.8) scale(0.92 1)" x="0" y="0" font-size="11.5" font-weight="400" fill="#111" text-anchor="end" >0</text>
<text transform="translate(1328 199.8) scale(0.92 1)" x="0" y="0" font-size="11.5" font-weight="400" fill="#111" text-anchor="end" >0.00</text>
<rect x="997" y="205" width="336" height="19" fill="#ffffff"/>
<line x1="997" y1="223.5" x2="1333" y2="223.5" stroke="#b6b6be" stroke-width="1"/>
<text transform="translate(999 218.8) scale(0.92 1)" x="0" y="0" font-size="11.5" font-weight="400" fill="#111" text-anchor="start" >adaptive item type</text>
<text transform="translate(1216 218.8) scale(0.92 1)" x="0" y="0" font-size="11.5" font-weight="400" fill="#111" text-anchor="end" >0</text>
<text transform="translate(1256 218.8) scale(0.92 1)" x="0" y="0" font-size="11.5" font-weight="400" fill="#111" text-anchor="end" >0</text>
<text transform="translate(1328 218.8) scale(0.92 1)" x="0" y="0" font-size="11.5" font-weight="400" fill="#111" text-anchor="end" >0.00</text>
<rect x="997" y="224" width="336" height="19" fill="#f1f1fb"/>
<line x1="997" y1="242.5" x2="1333" y2="242.5" stroke="#b6b6be" stroke-width="1"/>
<text transform="translate(999 237.8) scale(0.92 1)" x="0" y="0" font-size="11.5" font-weight="400" fill="#111" text-anchor="start" >ball nosed profile</text>
<text transform="translate(1216 237.8) scale(0.92 1)" x="0" y="0" font-size="11.5" font-weight="400" fill="#111" text-anchor="end" >0</text>
<text transform="translate(1256 237.8) scale(0.92 1)" x="0" y="0" font-size="11.5" font-weight="400" fill="#111" text-anchor="end" >0</text>
<text transform="translate(1328 237.8) scale(0.92 1)" x="0" y="0" font-size="11.5" font-weight="400" fill="#111" text-anchor="end" >0.00</text>
<rect x="997" y="243" width="336" height="19" fill="#ffffff"/>
<line x1="997" y1="261.5" x2="1333" y2="261.5" stroke="#b6b6be" stroke-width="1"/>
<text transform="translate(999 256.8) scale(0.92 1)" x="0" y="0" font-size="11.5" font-weight="400" fill="#111" text-anchor="start" >broach</text>
<text transform="translate(1216 256.8) scale(0.92 1)" x="0" y="0" font-size="11.5" font-weight="400" fill="#111" text-anchor="end" >0</text>
<text transform="translate(1256 256.8) scale(0.92 1)" x="0" y="0" font-size="11.5" font-weight="400" fill="#111" text-anchor="end" >0</text>
<text transform="translate(1328 256.8) scale(0.92 1)" x="0" y="0" font-size="11.5" font-weight="400" fill="#111" text-anchor="end" >0.00</text>
<rect x="997" y="262" width="336" height="19" fill="#f1f1fb"/>
<line x1="997" y1="280.5" x2="1333" y2="280.5" stroke="#b6b6be" stroke-width="1"/>
<text transform="translate(999 275.8) scale(0.92 1)" x="0" y="0" font-size="11.5" font-weight="400" fill="#111" text-anchor="start" >burr tool</text>
<text transform="translate(1216 275.8) scale(0.92 1)" x="0" y="0" font-size="11.5" font-weight="400" fill="#111" text-anchor="end" >0</text>
<text transform="translate(1256 275.8) scale(0.92 1)" x="0" y="0" font-size="11.5" font-weight="400" fill="#111" text-anchor="end" >0</text>
<text transform="translate(1328 275.8) scale(0.92 1)" x="0" y="0" font-size="11.5" font-weight="400" fill="#111" text-anchor="end" >0.00</text>
<rect x="997" y="281" width="336" height="19" fill="#ffffff"/>
<line x1="997" y1="299.5" x2="1333" y2="299.5" stroke="#b6b6be" stroke-width="1"/>
<text transform="translate(999 294.8) scale(0.92 1)" x="0" y="0" font-size="11.5" font-weight="400" fill="#111" text-anchor="start" >cartridge</text>
<text transform="translate(1216 294.8) scale(0.92 1)" x="0" y="0" font-size="11.5" font-weight="400" fill="#111" text-anchor="end" >0</text>
<text transform="translate(1256 294.8) scale(0.92 1)" x="0" y="0" font-size="11.5" font-weight="400" fill="#111" text-anchor="end" >0</text>
<text transform="translate(1328 294.8) scale(0.92 1)" x="0" y="0" font-size="11.5" font-weight="400" fill="#111" text-anchor="end" >0.00</text>
<rect x="997" y="300" width="336" height="19" fill="#f1f1fb"/>
<line x1="997" y1="318.5" x2="1333" y2="318.5" stroke="#b6b6be" stroke-width="1"/>
<text transform="translate(999 313.8) scale(0.92 1)" x="0" y="0" font-size="11.5" font-weight="400" fill="#111" text-anchor="start" >chamfer drill</text>
<text transform="translate(1216 313.8) scale(0.92 1)" x="0" y="0" font-size="11.5" font-weight="400" fill="#111" text-anchor="end" >0</text>
<text transform="translate(1256 313.8) scale(0.92 1)" x="0" y="0" font-size="11.5" font-weight="400" fill="#111" text-anchor="end" >0</text>
<text transform="translate(1328 313.8) scale(0.92 1)" x="0" y="0" font-size="11.5" font-weight="400" fill="#111" text-anchor="end" >0.00</text>
<rect x="997" y="319" width="336" height="19" fill="#ffffff"/>
<line x1="997" y1="337.5" x2="1333" y2="337.5" stroke="#b6b6be" stroke-width="1"/>
<text transform="translate(999 332.8) scale(0.92 1)" x="0" y="0" font-size="11.5" font-weight="400" fill="#111" text-anchor="start" >chamfered corner</text>
<text transform="translate(1216 332.8) scale(0.92 1)" x="0" y="0" font-size="11.5" font-weight="400" fill="#111" text-anchor="end" >0</text>
<text transform="translate(1256 332.8) scale(0.92 1)" x="0" y="0" font-size="11.5" font-weight="400" fill="#111" text-anchor="end" >0</text>
<text transform="translate(1328 332.8) scale(0.92 1)" x="0" y="0" font-size="11.5" font-weight="400" fill="#111" text-anchor="end" >0.00</text>
<rect x="997" y="338" width="336" height="19" fill="#f1f1fb"/>
<line x1="997" y1="356.5" x2="1333" y2="356.5" stroke="#b6b6be" stroke-width="1"/>
<text transform="translate(999 351.8) scale(0.92 1)" x="0" y="0" font-size="11.5" font-weight="400" fill="#111" text-anchor="start" >chip breaker</text>
<text transform="translate(1216 351.8) scale(0.92 1)" x="0" y="0" font-size="11.5" font-weight="400" fill="#111" text-anchor="end" >0</text>
<text transform="translate(1256 351.8) scale(0.92 1)" x="0" y="0" font-size="11.5" font-weight="400" fill="#111" text-anchor="end" >0</text>
<text transform="translate(1328 351.8) scale(0.92 1)" x="0" y="0" font-size="11.5" font-weight="400" fill="#111" text-anchor="end" >0.00</text>
<rect x="997" y="357" width="336" height="19" fill="#ffffff"/>
<line x1="997" y1="375.5" x2="1333" y2="375.5" stroke="#b6b6be" stroke-width="1"/>
<text transform="translate(999 370.8) scale(0.92 1)" x="0" y="0" font-size="11.5" font-weight="400" fill="#111" text-anchor="start" >chip management</text>
<text transform="translate(1216 370.8) scale(0.92 1)" x="0" y="0" font-size="11.5" font-weight="400" fill="#111" text-anchor="end" >0</text>
<text transform="translate(1256 370.8) scale(0.92 1)" x="0" y="0" font-size="11.5" font-weight="400" fill="#111" text-anchor="end" >0</text>
<text transform="translate(1328 370.8) scale(0.92 1)" x="0" y="0" font-size="11.5" font-weight="400" fill="#111" text-anchor="end" >0.00</text>
<rect x="997" y="376" width="336" height="19" fill="#f1f1fb"/>
<line x1="997" y1="394.5" x2="1333" y2="394.5" stroke="#b6b6be" stroke-width="1"/>
<text transform="translate(999 389.8) scale(0.92 1)" x="0" y="0" font-size="11.5" font-weight="400" fill="#111" text-anchor="start" >conical drill</text>
<text transform="translate(1216 389.8) scale(0.92 1)" x="0" y="0" font-size="11.5" font-weight="400" fill="#111" text-anchor="end" >0</text>
<text transform="translate(1256 389.8) scale(0.92 1)" x="0" y="0" font-size="11.5" font-weight="400" fill="#111" text-anchor="end" >0</text>
<text transform="translate(1328 389.8) scale(0.92 1)" x="0" y="0" font-size="11.5" font-weight="400" fill="#111" text-anchor="end" >0.00</text>
<rect x="997" y="395" width="336" height="19" fill="#ffffff"/>
<line x1="997" y1="413.5" x2="1333" y2="413.5" stroke="#b6b6be" stroke-width="1"/>
<text transform="translate(999 408.8) scale(0.92 1)" x="0" y="0" font-size="11.5" font-weight="400" fill="#111" text-anchor="start" >conical tap</text>
<text transform="translate(1216 408.8) scale(0.92 1)" x="0" y="0" font-size="11.5" font-weight="400" fill="#111" text-anchor="end" >0</text>
<text transform="translate(1256 408.8) scale(0.92 1)" x="0" y="0" font-size="11.5" font-weight="400" fill="#111" text-anchor="end" >0</text>
<text transform="translate(1328 408.8) scale(0.92 1)" x="0" y="0" font-size="11.5" font-weight="400" fill="#111" text-anchor="end" >0.00</text>
<rect x="997" y="414" width="336" height="19" fill="#f1f1fb"/>
<line x1="997" y1="432.5" x2="1333" y2="432.5" stroke="#b6b6be" stroke-width="1"/>
<text transform="translate(999 427.8) scale(0.92 1)" x="0" y="0" font-size="11.5" font-weight="400" fill="#111" text-anchor="start" >core drill</text>
<text transform="translate(1216 427.8) scale(0.92 1)" x="0" y="0" font-size="11.5" font-weight="400" fill="#111" text-anchor="end" >0</text>
<text transform="translate(1256 427.8) scale(0.92 1)" x="0" y="0" font-size="11.5" font-weight="400" fill="#111" text-anchor="end" >0</text>
<text transform="translate(1328 427.8) scale(0.92 1)" x="0" y="0" font-size="11.5" font-weight="400" fill="#111" text-anchor="end" >0.00</text>
<rect x="997" y="433" width="336" height="19" fill="#ffffff"/>
<line x1="997" y1="451.5" x2="1333" y2="451.5" stroke="#b6b6be" stroke-width="1"/>
<text transform="translate(999 446.8) scale(0.92 1)" x="0" y="0" font-size="11.5" font-weight="400" fill="#111" text-anchor="start" >counterbore drill</text>
<text transform="translate(1216 446.8) scale(0.92 1)" x="0" y="0" font-size="11.5" font-weight="400" fill="#111" text-anchor="end" >0</text>
<text transform="translate(1256 446.8) scale(0.92 1)" x="0" y="0" font-size="11.5" font-weight="400" fill="#111" text-anchor="end" >0</text>
<text transform="translate(1328 446.8) scale(0.92 1)" x="0" y="0" font-size="11.5" font-weight="400" fill="#111" text-anchor="end" >0.00</text>
<rect x="997" y="452" width="336" height="19" fill="#f1f1fb"/>
<line x1="997" y1="470.5" x2="1333" y2="470.5" stroke="#b6b6be" stroke-width="1"/>
<text transform="translate(999 465.8) scale(0.92 1)" x="0" y="0" font-size="11.5" font-weight="400" fill="#111" text-anchor="start" >countersink drill</text>
<text transform="translate(1216 465.8) scale(0.92 1)" x="0" y="0" font-size="11.5" font-weight="400" fill="#111" text-anchor="end" >0</text>
<text transform="translate(1256 465.8) scale(0.92 1)" x="0" y="0" font-size="11.5" font-weight="400" fill="#111" text-anchor="end" >0</text>
<text transform="translate(1328 465.8) scale(0.92 1)" x="0" y="0" font-size="11.5" font-weight="400" fill="#111" text-anchor="end" >0.00</text>
<rect x="997" y="471" width="336" height="19" fill="#ffffff"/>
<line x1="997" y1="489.5" x2="1333" y2="489.5" stroke="#b6b6be" stroke-width="1"/>
<text transform="translate(999 484.8) scale(0.92 1)" x="0" y="0" font-size="11.5" font-weight="400" fill="#111" text-anchor="start" >cutting corner</text>
<text transform="translate(1216 484.8) scale(0.92 1)" x="0" y="0" font-size="11.5" font-weight="400" fill="#111" text-anchor="end" >0</text>
<text transform="translate(1256 484.8) scale(0.92 1)" x="0" y="0" font-size="11.5" font-weight="400" fill="#111" text-anchor="end" >0</text>
<text transform="translate(1328 484.8) scale(0.92 1)" x="0" y="0" font-size="11.5" font-weight="400" fill="#111" text-anchor="end" >0.00</text>
<rect x="997" y="490" width="336" height="19" fill="#f1f1fb"/>
<line x1="997" y1="508.5" x2="1333" y2="508.5" stroke="#b6b6be" stroke-width="1"/>
<text transform="translate(999 503.8) scale(0.92 1)" x="0" y="0" font-size="11.5" font-weight="400" fill="#111" text-anchor="start" >cutting edge</text>
<text transform="translate(1216 503.8) scale(0.92 1)" x="0" y="0" font-size="11.5" font-weight="400" fill="#111" text-anchor="end" >0</text>
<text transform="translate(1256 503.8) scale(0.92 1)" x="0" y="0" font-size="11.5" font-weight="400" fill="#111" text-anchor="end" >0</text>
<text transform="translate(1328 503.8) scale(0.92 1)" x="0" y="0" font-size="11.5" font-weight="400" fill="#111" text-anchor="end" >0.00</text>
<rect x="997" y="509" width="336" height="19" fill="#ffffff"/>
<line x1="997" y1="527.5" x2="1333" y2="527.5" stroke="#b6b6be" stroke-width="1"/>
<text transform="translate(999 522.8) scale(0.92 1)" x="0" y="0" font-size="11.5" font-weight="400" fill="#111" text-anchor="start" >cutting edge conditioned</text>
<text transform="translate(1216 522.8) scale(0.92 1)" x="0" y="0" font-size="11.5" font-weight="400" fill="#111" text-anchor="end" >0</text>
<text transform="translate(1256 522.8) scale(0.92 1)" x="0" y="0" font-size="11.5" font-weight="400" fill="#111" text-anchor="end" >0</text>
<text transform="translate(1328 522.8) scale(0.92 1)" x="0" y="0" font-size="11.5" font-weight="400" fill="#111" text-anchor="end" >0.00</text>
<rect x="997" y="528" width="336" height="19" fill="#f1f1fb"/>
<line x1="997" y1="546.5" x2="1333" y2="546.5" stroke="#b6b6be" stroke-width="1"/>
<text transform="translate(999 541.8) scale(0.92 1)" x="0" y="0" font-size="11.5" font-weight="400" fill="#111" text-anchor="start" >cutting edge interrupted</text>
<text transform="translate(1216 541.8) scale(0.92 1)" x="0" y="0" font-size="11.5" font-weight="400" fill="#111" text-anchor="end" >0</text>
<text transform="translate(1256 541.8) scale(0.92 1)" x="0" y="0" font-size="11.5" font-weight="400" fill="#111" text-anchor="end" >0</text>
<text transform="translate(1328 541.8) scale(0.92 1)" x="0" y="0" font-size="11.5" font-weight="400" fill="#111" text-anchor="end" >0.00</text>
<rect x="997" y="547" width="336" height="19" fill="#ffffff"/>
<line x1="997" y1="565.5" x2="1333" y2="565.5" stroke="#b6b6be" stroke-width="1"/>
<text transform="translate(999 560.8) scale(0.92 1)" x="0" y="0" font-size="11.5" font-weight="400" fill="#111" text-anchor="start" >cutting edge major</text>
<text transform="translate(1216 560.8) scale(0.92 1)" x="0" y="0" font-size="11.5" font-weight="400" fill="#111" text-anchor="end" >0</text>
<text transform="translate(1256 560.8) scale(0.92 1)" x="0" y="0" font-size="11.5" font-weight="400" fill="#111" text-anchor="end" >0</text>
<text transform="translate(1328 560.8) scale(0.92 1)" x="0" y="0" font-size="11.5" font-weight="400" fill="#111" text-anchor="end" >0.00</text>
<rect x="997" y="566" width="336" height="19" fill="#f1f1fb"/>
<line x1="997" y1="584.5" x2="1333" y2="584.5" stroke="#b6b6be" stroke-width="1"/>
<text transform="translate(999 579.8) scale(0.92 1)" x="0" y="0" font-size="11.5" font-weight="400" fill="#111" text-anchor="start" >cutting edge minor</text>
<text transform="translate(1216 579.8) scale(0.92 1)" x="0" y="0" font-size="11.5" font-weight="400" fill="#111" text-anchor="end" >0</text>
<text transform="translate(1256 579.8) scale(0.92 1)" x="0" y="0" font-size="11.5" font-weight="400" fill="#111" text-anchor="end" >0</text>
<text transform="translate(1328 579.8) scale(0.92 1)" x="0" y="0" font-size="11.5" font-weight="400" fill="#111" text-anchor="end" >0.00</text>
<rect x="997" y="585" width="336" height="19" fill="#ffffff"/>
<line x1="997" y1="603.5" x2="1333" y2="603.5" stroke="#b6b6be" stroke-width="1"/>
<text transform="translate(999 598.8) scale(0.92 1)" x="0" y="0" font-size="11.5" font-weight="400" fill="#111" text-anchor="start" >cutting item profile</text>
<text transform="translate(1216 598.8) scale(0.92 1)" x="0" y="0" font-size="11.5" font-weight="400" fill="#111" text-anchor="end" >0</text>
<text transform="translate(1256 598.8) scale(0.92 1)" x="0" y="0" font-size="11.5" font-weight="400" fill="#111" text-anchor="end" >0</text>
<text transform="translate(1328 598.8) scale(0.92 1)" x="0" y="0" font-size="11.5" font-weight="400" fill="#111" text-anchor="end" >0.00</text>
<rect x="997" y="604" width="336" height="19" fill="#f1f1fb"/>
<line x1="997" y1="622.5" x2="1333" y2="622.5" stroke="#b6b6be" stroke-width="1"/>
<text transform="translate(999 617.8) scale(0.92 1)" x="0" y="0" font-size="11.5" font-weight="400" fill="#111" text-anchor="start" >cylindrical broach</text>
<text transform="translate(1216 617.8) scale(0.92 1)" x="0" y="0" font-size="11.5" font-weight="400" fill="#111" text-anchor="end" >0</text>
<text transform="translate(1256 617.8) scale(0.92 1)" x="0" y="0" font-size="11.5" font-weight="400" fill="#111" text-anchor="end" >0</text>
<text transform="translate(1328 617.8) scale(0.92 1)" x="0" y="0" font-size="11.5" font-weight="400" fill="#111" text-anchor="end" >0.00</text>
<rect x="997" y="623" width="336" height="19" fill="#ffffff"/>
<line x1="997" y1="641.5" x2="1333" y2="641.5" stroke="#b6b6be" stroke-width="1"/>
<text transform="translate(999 636.8) scale(0.92 1)" x="0" y="0" font-size="11.5" font-weight="400" fill="#111" text-anchor="start" >cylindrical drill</text>
<text transform="translate(1216 636.8) scale(0.92 1)" x="0" y="0" font-size="11.5" font-weight="400" fill="#111" text-anchor="end" >0</text>
<text transform="translate(1256 636.8) scale(0.92 1)" x="0" y="0" font-size="11.5" font-weight="400" fill="#111" text-anchor="end" >0</text>
<text transform="translate(1328 636.8) scale(0.92 1)" x="0" y="0" font-size="11.5" font-weight="400" fill="#111" text-anchor="end" >0.00</text>
<line x1="1180.5" y1="52" x2="1180.5" y2="631" stroke="#c4c4cc" stroke-width="1"/>
<line x1="1220.5" y1="52" x2="1220.5" y2="631" stroke="#c4c4cc" stroke-width="1"/>
<line x1="1260.5" y1="52" x2="1260.5" y2="631" stroke="#c4c4cc" stroke-width="1"/>
</g>
<rect x="1333" y="53" width="17" height="577.5" fill="#f4f4f4"/>
<line x1="1333.5" y1="53" x2="1333.5" y2="631" stroke="#c8c8c8" stroke-width="1"/>
<linearGradient id="thumbg" x1="0" y1="0" x2="1" y2="0"><stop offset="0" stop-color="#f6f6f6"/><stop offset="0.6" stop-color="#e2e2e2"/><stop offset="1" stop-color="#c4c4c4"/></linearGradient>
<rect x="1335" y="71.5" width="13.5" height="219" rx="1.5" fill="url(#thumbg)" stroke="#b8b8b8" stroke-width="1"/>
<path d="M1338.5 64 L1342 60.5 L1345.5 64 Z" fill="#505050"/>
<path d="M1338.5 619.5 L1342 623 L1345.5 619.5 Z" fill="#505050"/>
<path d="M1338.5 179.5 H1344.5 M1338.5 181.5 H1344.5 M1338.5 183.5 H1344.5" stroke="#777" stroke-width="0.8"/>
<path d="M1336.5 38.8 H1343.3 V42.3 H1336.5 Z" fill="#5060c8" stroke="#000050" stroke-width="1"/>
<rect x="1338.8" y="41.7" width="5.7" height="7.6" fill="#c8d0f8" stroke="#000040" stroke-width="1.4"/>
<path d="M1340.2 43.9 H1343.2 M1340.2 45.8 H1343.2 M1340.2 47.7 H1343.2" stroke="#3040a0" stroke-width="0.9"/>
<rect x="1241.5" y="639.5" width="48" height="39" rx="3" fill="url(#btng)" stroke="#707080" stroke-width="1"/>
<rect x="1303.5" y="639.5" width="48" height="39" rx="3" fill="url(#btng)" stroke="#707080" stroke-width="1"/>
<path d="M1270 645.5 C1277 645 1281 650 1280.5 657 C1280 663 1277 667 1272 668 C1270 672 1266 673 1261 672.5 C1255 672 1251.5 668 1252 663 C1252.5 659 1256 656 1260 656 C1261 650 1264 646 1270 645.5 Z" fill="none" stroke="#505050" stroke-width="0.9"/>
<linearGradient id="envg" x1="0" y1="0" x2="0" y2="1"><stop offset="0" stop-color="#ffb030"/><stop offset="1" stop-color="#e88a10"/></linearGradient>
<path d="M1249.5 649 L1268.5 647.5 V662 L1249.5 660.5 Z" fill="url(#envg)" stroke="#9a5a00" stroke-width="0.9"/>
<path d="M1249.5 660.5 L1257 654 M1268.5 662 L1261 655 M1249.5 649 L1259 656 L1268.5 647.5" fill="none" stroke="#a86400" stroke-width="0.7"/>
<circle cx="1259" cy="655" r="3.3" fill="#f8b030" stroke="#fff4d0" stroke-width="1"/>
<text x="1259" y="657.6" font-size="6.5" font-weight="700" fill="#fff4d0" text-anchor="middle">@</text>
<rect x="1263" y="668" width="7" height="4" fill="#7090d0" opacity="0.7"/>
<rect x="1267" y="661.5" width="11.5" height="9.5" fill="#3a8a6a" stroke="#2a6a4a" stroke-width="0.8"/>
<rect x="1269" y="663.3" width="6" height="5" fill="#40c070"/>
<rect x="1277" y="664" width="3" height="7" fill="#a0c8e0" opacity="0.7"/>
<path d="M1320.7 658.5 A5.8 5.8 0 0 1 1332.3 658.5" fill="none" stroke="#4a88a8" stroke-width="3.6"/>
<path d="M1332.3 658.5 A5.8 5.8 0 0 1 1320.7 658.5" fill="none" stroke="#e8982a" stroke-width="3.6"/>
<path d="M1198.5 542 V558.5 L1202.3 554.8 L1205 560.5 L1207.5 559.5 L1204.8 554 L1209.5 553.7 Z" fill="#fff" stroke="#000" stroke-width="0.9" stroke-linejoin="miter"/></svg></body></html>
